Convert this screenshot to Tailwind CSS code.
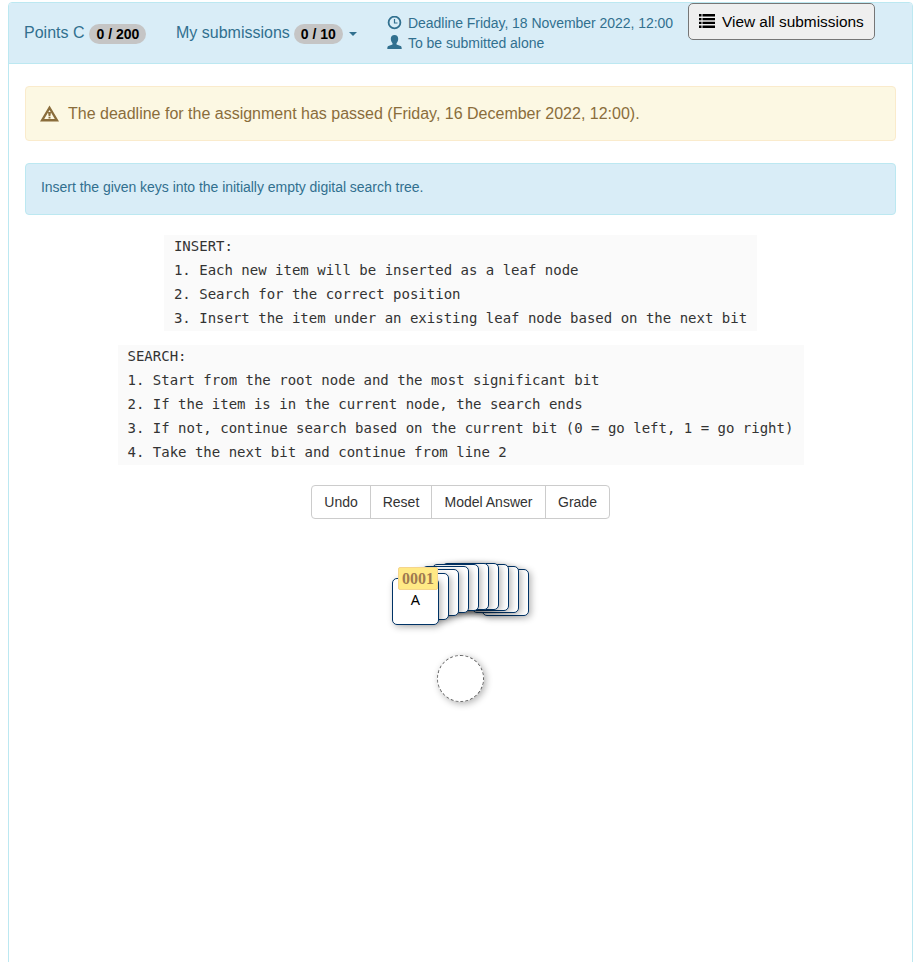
<!DOCTYPE html>
<html lang="en">
<head>
<meta charset="utf-8">
<title>Digital search tree exercise</title>
<script src="https://cdn.jsdelivr.net/npm/@tailwindcss/browser@4"></script>
</head>
<body class="h-[962px] overflow-hidden bg-white pt-[2px] pl-2 font-['Liberation_Sans',Arial,sans-serif] text-[14px] leading-5 text-[#333]">
<main class="h-[1000px] w-[905px] rounded-[4px] border border-[#bce8f1]">
  <header class="flex h-[61px] items-start rounded-t-[3px] border-b border-[#bce8f1] bg-[#d9edf7] pl-[15px] text-[#31708f]">
    <div class="mt-[19px] flex h-[22px] w-[152px] items-center text-[16px] whitespace-nowrap">Points C<span class="mt-[2px] ml-[5px] flex h-5 w-[57px] items-center justify-center rounded-[10px] bg-[#c5c5c5] text-[14px] font-bold text-black">0 / 200</span></div>
    <div class="mt-[19px] flex h-[22px] w-[211px] items-center text-[16px] whitespace-nowrap">My submissions<span class="mt-[2px] ml-[4px] flex h-5 w-[49px] items-center justify-center rounded-[10px] bg-[#c5c5c5] text-[14px] font-bold text-black">0 / 10</span><span class="mt-[2px] ml-[6px] border-x-4 border-t-4 border-x-transparent border-t-[#31708f]"></span></div>
    <div class="mt-[10px] w-[301px] whitespace-nowrap">
      <div class="flex h-5 items-center tracking-[-0.04px]"><svg class="mr-[6px] mb-px h-[14px] w-[15px]" viewBox="0 0 15 14"><circle cx="7.500" cy="6.500" r="5.900" fill="none" stroke="currentColor" stroke-width="1.800"/><path d="M7.500 3v4h3" fill="none" stroke="currentColor" stroke-width="1.200"/></svg>Deadline Friday, 18 November 2022, 12:00</div>
      <div class="flex h-5 items-center tracking-[-0.04px]"><svg class="mr-[6px] mb-[2px] h-[14px] w-[15px]" viewBox="0 0 15 14" fill="currentColor"><path d="M7.500 0C5.100 0 3.800 1.500 3.800 3.800c0 1.800.7 3.500 1.700 4.400v1.200L1.400 11C.6 11.400.3 12 .3 14h14.400c0-2-.3-2.600-1.100-3L9.500 9.400V8.200c1-.9 1.700-2.600 1.700-4.400C11.200 1.500 9.900 0 7.500 0Z"/></svg>To be submitted alone</div>
    </div>
    <button class="flex h-[37px] w-[187px] items-center rounded-[5px] border border-[#767676] bg-[#efefef] pl-[10px] text-[15.4px] whitespace-nowrap text-black"><svg class="mr-[7px] mb-[2px] h-[14px] w-4" viewBox="0 0 16 14" fill="currentColor"><path d="M0 0h2.500v2.500H0zM3.500 0H16v2.500H3.500zM0 4h2.500v2.200H0zM3.500 4H16v2.200H3.500zM0 7.800h2.500V10H0zM3.500 7.800H16V10H3.500zM0 11.500h2.500V14H0zM3.500 11.500H16V14H3.500z"/></svg>View all submissions</button>
  </header>
  <div class="px-4 pt-[22px]">
    <div class="flex h-[55px] items-center rounded-[4px] border border-[#faebcc] bg-[#fcf8e3] pl-[14px] text-[16px] text-[#8a6d3b]"><svg class="mr-[9px] h-[17px] w-[19px]" viewBox="0 0 19 17"><path fill="currentColor" fill-rule="evenodd" d="M9.500.5 19 16.500H0ZM9.500 5 4.200 14h10.600Z"/><path fill="currentColor" d="M8 7h3l-.6 4H8.600zM8.500 11.800h2v1.700h-2z"/></svg>The deadline for the assignment has passed (Friday, 16 December 2022, 12:00).</div>
    <div class="mt-[22px] h-[52px] rounded-[4px] border border-[#bce8f1] bg-[#d9edf7] px-[15px] pt-[13px] tracking-[-0.03px] text-[#31708f]">Insert the given keys into the initially empty digital search tree.</div>
    <div class="mt-5 flex flex-col items-center gap-[14px]">
      <pre class="h-24 bg-[#fafafa] px-[10px] font-['DejaVu_Sans_Mono',monospace] text-[14px] leading-6"><span class="-mt-px block">INSERT:
1. Each new item will be inserted as a leaf node
2. Search for the correct position
3. Insert the item under an existing leaf node based on the next bit</span></pre>
      <pre class="h-[120px] w-[686px] bg-[#fafafa] px-[10px] font-['DejaVu_Sans_Mono',monospace] text-[14px] leading-6"><span class="-mt-px block">SEARCH:
1. Start from the root node and the most significant bit
2. If the item is in the current node, the search ends
3. If not, continue search based on the current bit (0 = go left, 1 = go right)
4. Take the next bit and continue from line 2</span></pre>
    </div>
    <div class="mx-auto mt-5 flex h-[34px] w-[299px] divide-x divide-[#ccc] rounded-[4px] border border-[#ccc]">
      <button class="w-[59px]">Undo</button><button class="w-[61px]">Reset</button><button class="w-[114px]">Model Answer</button><button class="w-[63px]">Grade</button>
    </div>
  </div>
  <div class="relative mx-auto mt-[43px] h-[142px] w-[137px]">
    <div class="absolute top-[7px] left-[90px] size-[47px] rounded-[5px] border border-[#036] bg-white shadow-[2px_2px_7px_rgba(0,0,0,0.3)]"></div>
    <div class="absolute top-[4px] left-[80px] size-[47px] rounded-[5px] border border-[#036] bg-white shadow-[2px_2px_7px_rgba(0,0,0,0.3)]"></div>
    <div class="absolute top-[2px] left-[70px] size-[47px] rounded-[5px] border border-[#036] bg-white shadow-[2px_2px_7px_rgba(0,0,0,0.3)]"></div>
    <div class="absolute top-[1px] left-[60px] size-[47px] rounded-[5px] border border-[#036] bg-white shadow-[2px_2px_7px_rgba(0,0,0,0.3)]"></div>
    <div class="absolute top-[1px] left-[50px] size-[47px] rounded-[5px] border border-[#036] bg-white shadow-[2px_2px_7px_rgba(0,0,0,0.3)]"></div>
    <div class="absolute top-[2px] left-[40px] size-[47px] rounded-[5px] border border-[#036] bg-white shadow-[2px_2px_7px_rgba(0,0,0,0.3)]"></div>
    <div class="absolute top-[4px] left-[30px] size-[47px] rounded-[5px] border border-[#036] bg-white shadow-[2px_2px_7px_rgba(0,0,0,0.3)]"></div>
    <div class="absolute top-[7px] left-[20px] size-[47px] rounded-[5px] border border-[#036] bg-white shadow-[2px_2px_7px_rgba(0,0,0,0.3)]"></div>
    <div class="absolute top-[11px] left-[10px] size-[47px] rounded-[5px] border border-[#036] bg-white shadow-[2px_2px_7px_rgba(0,0,0,0.3)]"></div>
    <div class="absolute top-[16px] left-0 flex size-[47px] items-center justify-center rounded-[5px] border border-[#036] bg-white pb-[6px] font-['Noto_Sans',sans-serif] text-[14.500px] text-black shadow-[2px_2px_7px_rgba(0,0,0,0.3)]">A</div>
    <div class="absolute top-[5px] left-[6px] flex h-[23px] w-[40px] items-center justify-center rounded-[2px] border border-[#f5d58c] bg-[#ffe985] font-['Liberation_Serif',serif] text-[16px] font-bold text-[#a07a50]">0001</div>
    <div class="absolute top-[93px] left-[45px] size-[47px] rounded-full border border-dashed border-[#666] bg-white shadow-[2px_2px_7px_rgba(0,0,0,0.3)]"></div>
  </div>
</main>
</body>
</html>
